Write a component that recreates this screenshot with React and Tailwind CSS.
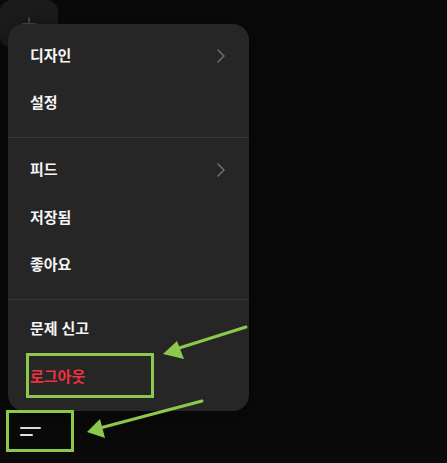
import React from "react";

function Chevron() {
  return (
    <svg width="24" height="24" viewBox="0 0 24 24" fill="none" stroke="#6b6b6b" strokeWidth="1.6" strokeLinecap="round" strokeLinejoin="round">
      <path d="m9 18 6-6-6-6" />
    </svg>
  );
}

function Item({ label, chevron, red, h = "h-[47px]" }) {
  return (
    <div className={`flex ${h} items-center justify-between pl-[22px] pr-[16px]`}>
      <span className={`text-[15px] font-bold ${red ? "text-[#f0323f]" : "text-[#f5f5f5]"}`}>{label}</span>
      {chevron && <Chevron />}
    </div>
  );
}

export default function App() {
  return (
    <div
      className="relative h-[463px] w-[447px] overflow-hidden bg-[#0a0a0a]"
      style={{ fontFamily: '"Noto Sans", "Noto Sans CJK KR", sans-serif' }}
    >
      <div className="flex h-full flex-col justify-between">
        <div className="flex h-[48px] w-[58px] items-center justify-center rounded-[12px] bg-[#1c1c1c]">
          <svg width="20" height="20" viewBox="0 0 24 24" fill="none" stroke="#4a4a4a" strokeWidth="2.4" strokeLinecap="round">
            <path d="M12 5v14M5 12h14" />
          </svg>
        </div>
        <div className="mb-[11px] ml-[6px] flex h-[42px] w-[68px] flex-col justify-center gap-[5px] pl-[14px]">
          <div className="h-[2px] w-[21px] rounded-full bg-[#e8e8e8]" />
          <div className="h-[2px] w-[13px] rounded-full bg-[#e8e8e8]" />
        </div>
      </div>

      <div className="absolute left-[8px] top-[24px] w-[241px] rounded-[16px] bg-[#262626] shadow-[0_4px_24px_rgba(0,0,0,0.5)]">
        <div className="pb-[11px] pt-2">
          <Item label="디자인" chevron />
          <Item label="설정" />
        </div>
        <div className="h-px bg-[#363636]" />
        <div className="pb-[11px] pt-2">
          <Item label="피드" chevron />
          <Item label="저장됨" h="h-[48px]" />
          <Item label="좋아요" />
        </div>
        <div className="h-px bg-[#363636]" />
        <div className="pb-[10px] pt-[5px]">
          <Item label="문제 신고" />
          <Item label="로그아웃" red h="h-[49px]" />
        </div>
      </div>

      <svg className="pointer-events-none absolute left-0 top-0" width="447" height="463" viewBox="0 0 447 463">
        <rect x="27.5" y="354.5" width="125" height="42" fill="none" stroke="#8cc84b" strokeWidth="3" />
        <rect x="7.5" y="411.5" width="65" height="39" fill="none" stroke="#8cc84b" strokeWidth="3" />
        <line x1="246" y1="327" x2="176" y2="349" stroke="#8cc84b" strokeWidth="3" strokeLinecap="round" />
        <polygon points="163,354 177,341 184,359" fill="#8cc84b" />
        <line x1="202" y1="401" x2="100" y2="428" stroke="#8cc84b" strokeWidth="3" strokeLinecap="round" />
        <polygon points="87,432 100,419 105,438" fill="#8cc84b" />
      </svg>
    </div>
  );
}
